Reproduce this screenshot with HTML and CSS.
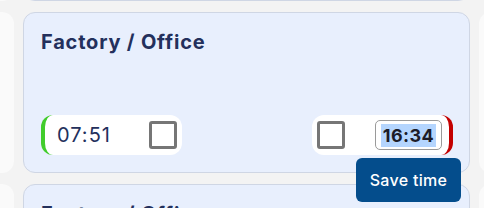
FILE: index.html
```html
<!DOCTYPE html>
<html lang="en">
    <head>
        <meta charset="UTF-8" />
        <meta name="viewport" content="width=device-width, initial-scale=1.0" />
        <title>Time registration</title>
        <link rel="stylesheet" href="styles.css">
    </head>
    <body>
        <div class="board">
            <div class="day"></div>
            <div class="day current"></div>
            <div class="day"></div>

            <div class="day"></div>
            <div class="day current">
                <h2 class="day-title">Factory / Office</h2>
                <div class="times">
                    <div class="time-pill start">
                        <span class="time-text">07:51</span>
                        <span class="check"></span>
                    </div>
                    <div class="time-pill end">
                        <span class="check"></span>
                        <span class="time-input"><span class="selected">16:34</span></span>
                        <div class="tooltip">Save time</div>
                    </div>
                </div>
            </div>
            <div class="day"></div>

            <div class="day"></div>
            <div class="day current">
                <h2 class="day-title">Factory / Office</h2>
            </div>
            <div class="day"></div>
        </div>
    </body>
</html>
```

FILE: styles.css
```css
body {
    margin: 0;
    background: #f3f3f3;
    font-family: Inter, "Noto Sans", sans-serif;
    overflow: hidden;
}
.board {
    display: grid;
    grid-template-columns: 447px 447px 447px;
    grid-template-rows: 161px 161px 161px;
    gap: 11px 9px;
    margin-left: -433px;
    margin-top: -160px;
}
.day {
    background: #fafafa;
    border-radius: 12px;
}
.day.current {
    background: #e8effd;
    border: 1px solid #cfd6e4;
    box-sizing: border-box;
    padding: 17px 16px 17px 17px;
    display: flex;
    flex-direction: column;
    justify-content: space-between;
}
.day-title {
    margin: 0;
    font-size: 20px;
    font-weight: 700;
    color: #23305c;
    letter-spacing: 0.8px;
}
.times {
    display: flex;
    justify-content: space-between;
}
.time-pill {
    position: relative;
    width: 141px;
    height: 40px;
    box-sizing: border-box;
    background: #fff;
    border-radius: 12px;
    display: flex;
    align-items: center;
    justify-content: space-between;
}
.time-pill.start {
    border-left: 4px solid #41cc2c;
    padding: 0 5px 0 12px;
}
.time-pill.end {
    border-right: 4px solid #c40000;
    padding: 0 7px 0 5px;
}
.time-text {
    font-size: 20px;
    color: #23305c;
    letter-spacing: 1px;
}
.check {
    width: 28px;
    height: 28px;
    box-sizing: border-box;
    border: 3px solid #767676;
    border-radius: 3px;
    background: #fff;
}
.time-input {
    width: 67px;
    height: 30px;
    box-sizing: border-box;
    border: 1px solid #9a9a9a;
    border-radius: 5px;
    display: flex;
    align-items: center;
    justify-content: center;
}
.selected {
    background: #b4d5fe;
    font-size: 18px;
    font-weight: 700;
    color: #1c1c28;
    padding: 0 2px;
    line-height: 23px;
    letter-spacing: 0.4px;
}
.tooltip {
    position: absolute;
    top: 43px;
    right: -12px;
    width: 105px;
    height: 44px;
    border-radius: 6px;
    background: #044d8c;
    color: #fff;
    font-size: 16px;
    font-weight: 500;
    letter-spacing: 0.3px;
    display: flex;
    align-items: center;
    justify-content: center;
}
```
